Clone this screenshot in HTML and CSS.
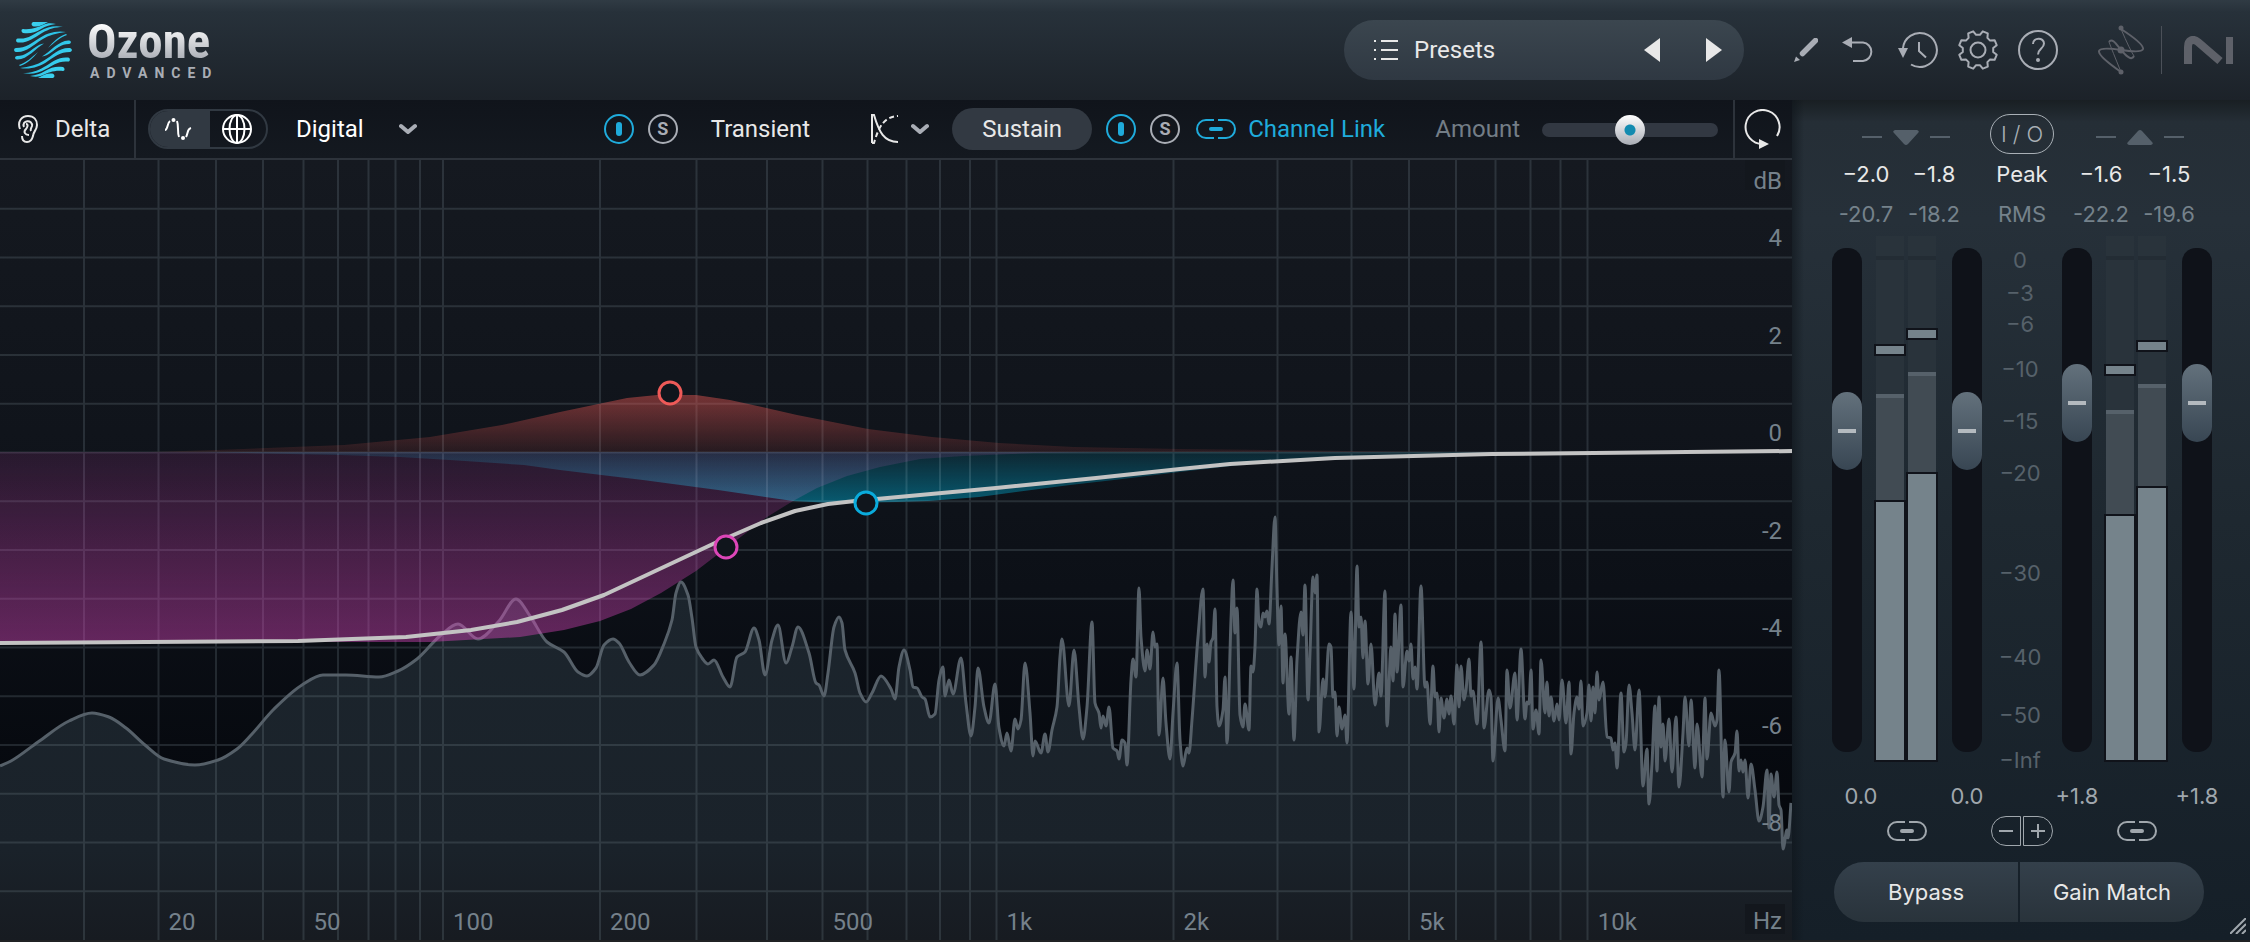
FILE: index.html
```html
<!DOCTYPE html>
<html lang="en">
<head>
<meta charset="utf-8">
<title>Ozone Advanced</title>
<link rel="stylesheet" href="styles.css">
</head>
<body>
<svg class="defs" aria-hidden="true">
  <symbol id="link" viewBox="0 0 40 20">
    <path d="M18 1H10a9 9 0 0 0 0 18H18M22 1H30a9 9 0 0 1 0 18H22" fill="none" stroke="currentColor" stroke-width="2"/>
    <rect x="13" y="8" width="14" height="4" rx="2" fill="currentColor"/>
  </symbol>
  <symbol id="chevron" viewBox="0 0 18 12">
    <path d="M2 3l7 6 7-6" fill="none" stroke="currentColor" stroke-width="4" stroke-linecap="round" stroke-linejoin="round"/>
  </symbol>
</svg>

<div class="app">
  <header class="header">
    <div class="brand">
      <svg class="brand-mark" viewBox="0 0 58 56" aria-hidden="true">
        <defs>
          <linearGradient id="mark" gradientUnits="userSpaceOnUse" x1="0" y1="0" x2="58" y2="56"><stop offset="0" stop-color="#45dcf4"/><stop offset="1" stop-color="#0fa3d6"/></linearGradient>
          <g id="waves">
            <path d="M19 0H34C29 3 25 5 20 4.500C17 4 17 1 19 0Z"/>
            <path d="M9 7C18 8 24 5 29 3C33 1 37 1 42 2C36 3 32 4 27 7C21 11 15 12 9 11C7 10 7 7 9 7Z"/>
            <path d="M4 16.500C14 17.500 20 12 26 9C33 5 41 3 49 5C41 5 35 7 28 11C20 16 13 21.500 4 20.500C1 20 2 16 4 16.500Z"/>
            <path d="M2 26C12 26 18 21 24 17C32 11 43 8 52 10C43 11 35 13 28 17.500C19 23 12 31 2 30C-1 29 0 26 2 26Z"/>
            <path d="M3 34C11 34 16 29 21 25.500C24 23 27 22 30 21.500C22 26 13 38 3 37.500C0 37 1 34 3 34Z"/>
            <path d="M5 43C12 41 18 35 24 30C19 36 13 42 6 44Z"/>
          </g>
        </defs>
        <g fill="url(#mark)"><use href="#waves"/><use href="#waves" transform="rotate(180 29 28)"/></g>
      </svg>
      <div class="brand-text">
        <span class="brand-name">Ozone</span>
        <span class="brand-tier">ADVANCED</span>
      </div>
    </div>

    <div class="presets">
      <button class="presets-open" type="button">
        <svg width="24" height="20" viewBox="0 0 24 20" aria-hidden="true"><path d="M0 1h2M0 10h2M0 19h2M7 1h17M7 10h17M7 19h17" stroke="currentColor" stroke-width="2"/></svg>
        Presets
      </button>
      <button class="step" type="button" aria-label="Previous preset"><svg width="16" height="24" viewBox="0 0 16 24"><path d="M16 0v24L0 12z" fill="currentColor"/></svg></button>
      <button class="step" type="button" aria-label="Next preset"><svg width="16" height="24" viewBox="0 0 16 24"><path d="M0 0v24l16-12z" fill="currentColor"/></svg></button>
    </div>

    <div class="tools">
      <button class="tool" type="button" aria-label="Edit"><svg width="24" height="24" viewBox="0 0 24 24"><path d="M8.500 15.500L21.500 2.500" stroke="currentColor" stroke-width="5.500" stroke-linecap="round"/><path d="M0 24l2-5.500 4 3.500z" fill="currentColor"/></svg></button>
      <button class="tool" type="button" aria-label="Undo"><svg width="40" height="40" viewBox="0 0 40 40"><path d="M14 12.500h11a9.300 9.300 0 0 1 0 18.500H15" fill="none" stroke="currentColor" stroke-width="2"/><path d="M4 12.500L14 7v11z" fill="currentColor"/></svg></button>
      <button class="tool" type="button" aria-label="History"><svg width="40" height="40" viewBox="0 0 40 40"><path d="M5 18A17 17 0 1 1 13 34.500M21 12v9l7 6.500" fill="none" stroke="currentColor" stroke-width="2"/><path d="M0 18h10L5 28z" fill="currentColor"/></svg></button>
      <button class="tool" type="button" aria-label="Settings"><svg width="40" height="40" viewBox="0 0 40 40" fill="none" stroke="currentColor" stroke-width="2" stroke-linejoin="round"><path d="M38.700 24.800L36.600 29.800L32.100 29.400L29.400 32.100L29.800 36.600L24.800 38.700L21.900 35.200H18.100L15.200 38.700L10.200 36.600L10.600 32.100L7.900 29.400L3.400 29.800L1.300 24.800L4.800 21.900V18.100L1.300 15.200L3.400 10.200L7.900 10.600L10.600 7.900L10.200 3.400L15.200 1.300L18.100 4.800H21.900L24.800 1.300L29.800 3.400L29.400 7.900L32.100 10.600L36.600 10.200L38.700 15.200L35.200 18.100V21.900Z"/><circle cx="20" cy="20" r="7.500"/></svg></button>
      <button class="tool" type="button" aria-label="Help"><svg width="40" height="40" viewBox="0 0 40 40"><circle cx="20" cy="20" r="19" fill="none" stroke="currentColor" stroke-width="2"/><path d="M15 14c0-7 11-7 11-.5 0 5-6 5-6 11" fill="none" stroke="currentColor" stroke-width="2"/><circle cx="20" cy="30" r="2" fill="currentColor"/></svg></button>
    </div>

    <div class="makers">
      <svg width="46" height="50" viewBox="0 0 46 50" fill="none" stroke="currentColor" aria-hidden="true">
        <path d="M23 4Q46 19 45 24Q44 28 23 25Q2 22 1 26Q0 31 23 47" stroke-width="2"/>
        <path d="M23 4Q32 25 36 31M11 17Q14 25 23 47" stroke-width="1"/>
        <path d="M36 31C33 37 27 29 23 25C19 20 14 12 11 17" stroke-width="2"/>
        <g fill="currentColor" stroke="none"><circle cx="23" cy="3" r="2.500"/><circle cx="23" cy="47" r="2.500"/><circle cx="23" cy="25" r="3.500"/></g>
      </svg>
      <span class="makers-rule"></span>
      <svg width="50" height="28" viewBox="0 0 50 28" aria-hidden="true">
        <path d="M4 28V11C4 4 9 2 14 6L36 25" fill="none" stroke="currentColor" stroke-width="8"/>
        <rect x="42" y="1" width="7" height="27" fill="currentColor"/>
      </svg>
    </div>
  </header>

  <main class="body">
    <section class="module">
      <div class="toolbar">
        <button class="delta" type="button">
          <svg width="20" height="28" viewBox="0 0 20 28" fill="none" stroke="currentColor" stroke-width="2" aria-hidden="true"><path d="M2 14C-1 6 4 1 10 1C16 1 19 5 19 10C19 15 15 17 15 21C14 25 12 27 9 27C6 27 4 25 4 21"/><path d="M6 12C3 5 15 4 14 11C13 14 12 14 13 16M8 9C11 9 9 13 8 14C5 17 7 20 11 20"/></svg>
          Delta
        </button>
        <div class="mode" role="group" aria-label="Mode">
          <button class="mode-item is-on" type="button" aria-label="Curve"><svg width="28" height="24" viewBox="0 0 28 24" fill="none" stroke="currentColor" stroke-width="2"><path d="M0 13C3 13 2 6 5 4M12 4C14 9 12 15 14 20M21 20C23 17 22 12 26 11"/><g fill="currentColor" stroke="none"><circle cx="8.500" cy="3" r="2"/><circle cx="18" cy="21" r="2"/></g></svg></button>
          <button class="mode-item" type="button" aria-label="Globe"><svg width="30" height="30" viewBox="0 0 30 30" fill="none" stroke="currentColor" stroke-width="2"><circle cx="15" cy="15" r="14"/><ellipse cx="15" cy="15" rx="7.500" ry="14"/><path d="M15 1v28M1 15h28"/></svg></button>
        </div>
        <label class="picker">
          <select class="picker-select" aria-label="Filter type"><option>Digital</option></select>
          <svg class="chevron" width="18" height="12"><use href="#chevron"/></svg>
        </label>

        <div class="channels">
          <button class="power" type="button" aria-label="Enable transient"><span class="power-bar"></span></button>
          <button class="solo" type="button" aria-label="Solo transient">S</button>
          <button class="tab tab-transient" type="button">Transient</button>
          <button class="shape" type="button" aria-label="Transient shape">
            <svg width="29" height="30" viewBox="0 0 29 30" fill="none" stroke="currentColor" stroke-width="2"><path d="M2 29V1H4C9 18 14 28 28 28"/><path d="M2 29H4C9 12 14 3 28 2" stroke-dasharray="5 3"/></svg>
            <svg class="chevron" width="18" height="12"><use href="#chevron"/></svg>
          </button>
          <button class="tab tab-sustain" type="button">Sustain</button>
          <button class="power" type="button" aria-label="Enable sustain"><span class="power-bar"></span></button>
          <button class="solo" type="button" aria-label="Solo sustain">S</button>
          <button class="channel-link" type="button"><svg width="40" height="20"><use href="#link"/></svg>Channel Link</button>
          <label class="amount-label" for="amount">Amount</label>
          <input class="amount" id="amount" type="range" min="0" max="100" value="50">
        </div>
        <button class="loop" type="button" aria-label="Reset"><svg width="38" height="40" viewBox="0 0 38 40"><path d="M34 27A17 17 0 1 0 20 35" fill="none" stroke="currentColor" stroke-width="2"/><path d="M16 30l10 5-10 5z" fill="currentColor"/></svg></button>
      </div>

      <div class="plot">
        <svg class="plot-art" viewBox="0 160 1792 780" preserveAspectRatio="none" aria-label="Equalizer curve">
          <defs>
            <linearGradient id="specFill" gradientUnits="userSpaceOnUse" x1="0" y1="580" x2="0" y2="940"><stop offset="0" stop-color="#1c252d"/><stop offset=".75" stop-color="#1a222a"/><stop offset="1" stop-color="#171b21"/></linearGradient>
            <linearGradient id="redFill" gradientUnits="userSpaceOnUse" x1="0" y1="394" x2="0" y2="452"><stop offset="0" stop-color="#f05a55" stop-opacity=".46"/><stop offset="1" stop-color="#f05a55" stop-opacity=".1"/></linearGradient>
            <linearGradient id="pinkFill" gradientUnits="userSpaceOnUse" x1="0" y1="452" x2="0" y2="642"><stop offset="0" stop-color="#dc46be" stop-opacity=".12"/><stop offset="1" stop-color="#dc46be" stop-opacity=".43"/></linearGradient>
            <linearGradient id="blueFill" gradientUnits="userSpaceOnUse" x1="0" y1="452" x2="0" y2="503"><stop offset="0" stop-color="#00b4dc" stop-opacity=".12"/><stop offset="1" stop-color="#00b4dc" stop-opacity=".45"/></linearGradient>
          </defs>
          <path id="specArea" fill="url(#specFill)"/>
          <path id="grid" class="grid"/>
          <path id="specLine" class="spec-line"/>
          <path id="pinkBand" fill="url(#pinkFill)"/>
          <path id="blueBand" class="blend" fill="url(#blueFill)"/>
          <path id="redBand" fill="url(#redFill)"/>
          <path id="sumLine" class="sum-line"/>
          <g class="nodes">
            <circle cx="670" cy="393" r="11" stroke="#ee5a58"/>
            <circle cx="726" cy="547" r="11" stroke="#dd46b8"/>
            <circle cx="866" cy="503" r="11" stroke="#0aabdc"/>
          </g>
        </svg>
        <span class="unit unit-db">dB</span>
        <span class="db" style="top:10.060%">4</span>
        <span class="db" style="top:22.560%">2</span>
        <span class="db" style="top:35.060%">0</span>
        <span class="db" style="top:47.560%">-2</span>
        <span class="db" style="top:60.060%">-4</span>
        <span class="db" style="top:72.560%">-6</span>
        <span class="db" style="top:85.060%">-8</span>
        <span class="hz" style="left:8.840%">20</span>
        <span class="hz" style="left:16.940%">50</span>
        <span class="hz" style="left:24.720%">100</span>
        <span class="hz" style="left:33.480%">200</span>
        <span class="hz" style="left:45.900%">500</span>
        <span class="hz" style="left:55.610%">1k</span>
        <span class="hz" style="left:65.490%">2k</span>
        <span class="hz" style="left:78.630%">5k</span>
        <span class="hz" style="left:88.600%">10k</span>
        <span class="unit unit-hz">Hz</span>
      </div>
    </section>

    <aside class="io">
      <div class="io-row">
        <div class="arrow"><i class="dash"></i><svg width="26" height="15" viewBox="0 0 26 15"><path d="M2 0H24Q27 1 25 3L15 14Q13 16 11 14L1 3Q-1 1 2 0Z" fill="currentColor"/></svg><i class="dash"></i></div>
        <button class="io-button" type="button"><span>I</span><span>/</span><span>O</span></button>
        <div class="arrow arrow-out"><i class="dash"></i><svg width="26" height="15" viewBox="0 0 26 15"><path d="M2 15H24Q27 14 25 12L15 1Q13-1 11 1L1 12Q-1 14 2 15Z" fill="currentColor"/></svg><i class="dash"></i></div>
      </div>
      <div class="io-row peak"><div class="pair"><span>−2.0</span><span>−1.8</span></div><span class="mid">Peak</span><div class="pair pair-out"><span>−1.6</span><span>−1.5</span></div></div>
      <div class="io-row rms"><div class="pair"><span>-20.7</span><span>-18.2</span></div><span class="mid">RMS</span><div class="pair pair-out"><span>-22.2</span><span>-19.6</span></div></div>

      <div class="io-row meters">
        <div class="strip">
          <input class="fader" type="range" min="0" max="1000" value="662" aria-label="Input left gain">
          <div class="meter"><div class="meter-mid" style="height:69.800%"></div><div class="meter-main" style="height:49.200%"></div><div class="meter-peak" style="bottom:77.500%"></div></div>
          <div class="meter"><div class="meter-mid" style="height:74%"></div><div class="meter-main" style="height:54.600%"></div><div class="meter-peak" style="bottom:80.500%"></div></div>
          <input class="fader" type="range" min="0" max="1000" value="662" aria-label="Input right gain">
        </div>
        <div class="scale">
          <span style="top:4.600%">0</span><span style="top:10.800%">−3</span><span style="top:16.800%">−6</span><span style="top:25.300%">−10</span><span style="top:35.200%">−15</span><span style="top:45%">−20</span><span style="top:64%">−30</span><span style="top:80%">−40</span><span style="top:91%">−50</span><span style="top:99.700%">−Inf</span>
        </div>
        <div class="strip">
          <input class="fader" type="range" min="0" max="1000" value="728" aria-label="Output left gain">
          <div class="meter"><div class="meter-mid" style="height:66.800%"></div><div class="meter-main" style="height:46.600%"></div><div class="meter-peak" style="bottom:73.700%"></div></div>
          <div class="meter"><div class="meter-mid" style="height:71.800%"></div><div class="meter-main" style="height:51.900%"></div><div class="meter-peak" style="bottom:78.200%"></div></div>
          <input class="fader" type="range" min="0" max="1000" value="728" aria-label="Output right gain">
        </div>
      </div>

      <div class="io-row gains"><div class="gain-pair gain-in"><span>0.0</span><span>0.0</span></div><span></span><div class="gain-pair"><span>+1.8</span><span>+1.8</span></div></div>
      <div class="io-row links">
        <button class="link" type="button" aria-label="Link input faders"><svg width="40" height="20"><use href="#link"/></svg></button>
        <div class="nudge">
          <button class="nudge-less" type="button" aria-label="Decrease"><svg width="14" height="14" viewBox="0 0 14 14"><path d="M0 7h14" stroke="currentColor" stroke-width="2"/></svg></button>
          <button class="nudge-more" type="button" aria-label="Increase"><svg width="14" height="14" viewBox="0 0 14 14"><path d="M0 7h14M7 0v14" stroke="currentColor" stroke-width="2"/></svg></button>
        </div>
        <button class="link" type="button" aria-label="Link output faders"><svg width="40" height="20"><use href="#link"/></svg></button>
      </div>
      <div class="actions"><button class="action" type="button">Bypass</button><button class="action" type="button">Gain Match</button></div>
      <svg class="grip" width="16" height="16" viewBox="0 0 16 16" aria-hidden="true"><path d="M0 16L16 0M6 16L16 6M12 16l4-4" stroke="currentColor" stroke-width="2"/></svg>
    </aside>
  </main>
</div>
<script src="plot.js"></script>
</body>
</html>
```

FILE: plot.js
```js
const spectrum = [
  0,766, 11,761, 38,742, 69,721, 92,713, 109,717, 126,728, 145,745, 164,759, 195,765, 218,760, 237,749, 252,734, 274,709,
  302,685, 323,675, 346,675, 379,677, 398,671, 417,659, 440,636, 458,624, 478,639, 499,621, 516,599, 530,616, 547,642,
  564,652, 578,672, 587,676, 596,668, 604,645, 613,639, 619,643, 629,662, 640,675, 654,665, 664,644, 672,620, 676,593,
  681,582, 688,595, 692,618, 696,647, 702,658, 708,664, 714,660, 723,677, 730,687, 737,657, 745,652, 754,628, 759,640,
  765,675, 772,640, 778,625, 786,663, 792,647, 798,627, 809,653, 816,683, 819,685, 824,696, 828,673, 834,627, 839,617,
  842,623, 845,650, 855,673, 860,693, 866,702, 872,693, 881,676, 891,689, 895,699, 899,667, 904,650, 910,670, 913,687,
  917,688, 922,697, 925,699, 930,717, 935,714, 939,680, 943,667, 945,696, 949,680, 953,694, 961,658, 966,703, 971,736,
  975,707, 978,668, 984,707, 989,723, 995,684, 999,728, 1004,746, 1007,733, 1011,751, 1015,719, 1018,729, 1021,720,
  1025,663, 1030,713, 1033,756, 1035,741, 1041,753, 1045,734, 1048,752, 1052,730, 1057,707, 1060,657, 1062,639, 1069,706,
  1074,650, 1079,707, 1083,739, 1087,707, 1092,622, 1095,703, 1099,713, 1101,728, 1103,716, 1106,726, 1109,707, 1113,748,
  1117,751, 1119,759, 1122,740, 1125,743, 1127,765, 1131,680, 1133,659, 1136,677, 1139,588, 1141,637, 1145,671, 1147,650,
  1150,669, 1153,632, 1155,647, 1157,644, 1159,735, 1163,678, 1166,723, 1170,759, 1173,713, 1177,663, 1180,740, 1183,766,
  1187,748, 1189,753, 1192,720, 1198,637, 1203,589, 1205,677, 1207,644, 1209,662, 1211,642, 1213,638, 1215,609, 1217,707,
  1219,726, 1223,710, 1225,677, 1227,743, 1231,620, 1233,580, 1235,633, 1237,608, 1240,715, 1243,727, 1245,704, 1249,730,
  1251,666, 1253,672, 1255,647, 1257,589, 1259,623, 1261,627, 1263,613, 1265,617, 1267,611, 1269,624, 1272,567, 1275,517,
  1277,590, 1279,645, 1281,606, 1283,683, 1285,634, 1289,714, 1291,657, 1294,740, 1297,660, 1301,612, 1303,635, 1305,585,
  1308,700, 1310,653, 1313,577, 1315,593, 1317,575, 1319,732, 1323,679, 1325,697, 1329,644, 1331,647, 1333,697, 1335,692,
  1337,736, 1339,707, 1342,729, 1345,715, 1347,743, 1351,612, 1354,689, 1357,566, 1359,627, 1361,617, 1363,658, 1365,621,
  1368,684, 1371,644, 1375,705, 1379,673, 1381,696, 1385,591, 1387,726, 1391,647, 1393,681, 1395,614, 1397,672, 1401,605,
  1403,687, 1407,651, 1409,661, 1411,644, 1413,679, 1415,667, 1417,689, 1421,586, 1425,687, 1427,682, 1430,724, 1433,666,
  1435,697, 1437,693, 1439,732, 1441,698, 1444,718, 1447,699, 1449,714, 1451,696, 1454,724, 1457,665, 1459,707, 1461,666,
  1464,700, 1466,690, 1469,659, 1471,696, 1473,691, 1477,724, 1481,642, 1484,728, 1489,690, 1491,697, 1493,761, 1498,698,
  1501,720, 1505,751, 1507,670, 1510,708, 1515,673, 1517,720, 1521,649, 1525,719, 1527,702, 1529,704, 1531,670, 1533,729,
  1536,710, 1539,734, 1541,660, 1545,713, 1547,682, 1549,716, 1551,697, 1554,721, 1557,704, 1559,720, 1562,680, 1566,723,
  1569,682, 1571,754, 1574,713, 1577,697, 1579,709, 1581,681, 1583,726, 1587,713, 1589,685, 1591,721, 1593,687, 1595,713,
  1597,672, 1599,700, 1603,682, 1607,737, 1611,738, 1613,750, 1615,743, 1617,768, 1621,693, 1624,752, 1626,743, 1629,685,
  1632,713, 1635,750, 1639,690, 1643,786, 1647,749, 1649,804, 1652,763, 1655,706, 1657,771, 1659,697, 1661,747, 1663,724,
  1665,761, 1669,719, 1672,772, 1676,717, 1679,787, 1683,733, 1685,697, 1689,746, 1691,700, 1695,768, 1697,724, 1702,777,
  1705,698, 1707,759, 1711,713, 1715,726, 1717,720, 1719,670, 1723,797, 1725,740, 1729,792, 1731,762, 1735,753, 1737,731,
  1739,771, 1741,760, 1743,772, 1745,760, 1748,798, 1751,764, 1755,790, 1759,821, 1763,807, 1767,770, 1769,828, 1771,774,
  1774,797, 1777,772, 1779,805, 1781,810, 1783,849, 1787,830, 1788,838, 1791,803
];
const pink = [0,642, 430,642, 520,637, 564,630, 600,621, 631,609, 661,593, 696,571, 713,558, 767,517, 793,501, 817,488, 847,476, 880,467, 920,459, 963,456, 1034,453, 1100,452];
const blue = [200,452, 340,455, 400,457, 450,460, 524,465, 560,470, 643,480, 718,490, 793,501, 833,503, 896,502, 928,501, 979,497, 1070,485, 1114,480, 1180,472, 1250,464, 1350,458, 1450,455, 1600,452];
const red = [150,452, 215,450, 344,445, 430,437, 502,425, 560,412, 627,398, 657,395, 696,395, 730,400, 762,407, 797,415, 868,429, 932,437, 999,443, 1074,447, 1180,449, 1350,451, 1450,452];
const sum = [0,643, 298,641, 406,637, 471,630, 517,622, 562,610, 604,595, 715,543, 761,523, 795,511, 828,504, 855,501, 996,488, 1096,478, 1180,469, 1230,464, 1335,458, 1492,454, 1792,451];
const columns = [84, 158.5, 216, 263, 303.5, 338, 368.5, 395.5, 420, 443, 600, 696.5, 767, 822.5, 867.5, 906.5, 940, 970, 996.5, 1173.5, 1277.5, 1351.5, 1409, 1456, 1495.5, 1530.5, 1560.5, 1587.5];

const pairs = flat => flat.reduce((out, v, i) => (i % 2 ? out[out.length - 1].push(v) : out.push([v]), out), []);
const straight = flat => 'M' + pairs(flat).map(p => p.join(' ')).join('L');

// Monotone cubic interpolation: smooth, with flat tangents at peaks and dips.
function smooth(flat) {
  const p = pairs(flat);
  const slope = i => (p[i + 1][1] - p[i][1]) / (p[i + 1][0] - p[i][0]);
  const tangent = p.map((_, i) => {
    if (i === 0) return slope(0);
    if (i === p.length - 1) return slope(i - 1);
    const a = slope(i - 1), b = slope(i);
    return a * b <= 0 ? 0 : 2 * a * b / (a + b);
  });
  let d = 'M' + p[0].join(' ');
  for (let i = 1; i < p.length; i++) {
    const h = (p[i][0] - p[i - 1][0]) / 3;
    d += `C${p[i - 1][0] + h} ${p[i - 1][1] + h * tangent[i - 1]} ${p[i][0] - h} ${p[i][1] - h * tangent[i]} ${p[i][0]} ${p[i][1]}`;
  }
  return d;
}

const draw = (id, d) => document.getElementById(id).setAttribute('d', d);
const line = smooth(spectrum);
draw('specLine', line);
draw('specArea', line + 'L1792 803V940H0Z');
draw('pinkBand', straight(pink) + 'L0 452Z');
draw('blueBand', straight(blue) + 'Z');
draw('redBand', straight(red) + 'Z');
draw('sumLine', straight(sum));
let grid = columns.map(x => `M${x} 160V940`).join('');
for (let i = 0; i < 15; i++) grid += `M0 ${208.75 + i * 48.75}H1792`;
draw('grid', grid);
```

FILE: styles.css
```css
* { box-sizing: border-box; }
body { margin: 0; background: #14191f; color: #e8e8e8; font: 24px/30px Roboto, "Liberation Sans", sans-serif; }
button, select { margin: 0; padding: 0; border: 0; background: none; color: inherit; font: inherit; }
svg { display: block; flex: none; }
.defs { position: absolute; width: 0; height: 0; }
.app { display: flex; flex-direction: column; min-height: 100vh; border-bottom: 2px solid #202224; }

.header { display: flex; align-items: center; height: 100px; padding: 0 16px 0 14px; background: linear-gradient(#303b44, #27313a 12%, #1c2229); }
.brand { display: flex; align-items: center; gap: 15px; margin-right: auto; }
.brand-mark { width: 58px; height: 56px; }
.brand-text { display: flex; flex-direction: column; }
.brand-name { font: bold 49px/46px "Liberation Sans Narrow", "Roboto Condensed", "Liberation Sans", sans-serif; color: transparent; background: linear-gradient(#ffffff 10%, #a9adb5 90%); background-clip: text; -webkit-background-clip: text; }
.brand-tier { padding-left: 3px; font: bold 14px/16px "Liberation Sans Narrow", Roboto, sans-serif; letter-spacing: 7px; color: #a9adb5; }
.presets { display: flex; align-items: center; width: 400px; height: 60px; padding: 0 22px 0 30px; border-radius: 30px; background: linear-gradient(#3b464f, #2f3842); }
.presets-open { display: flex; align-items: center; gap: 16px; margin-right: auto; }
.step { margin-left: 46px; }
.tools { display: flex; align-items: center; gap: 20px; margin-left: 50px; color: #a9adb5; }
.makers { display: flex; align-items: center; margin-left: 40px; color: #5e6169; }
.makers-rule { width: 1px; height: 48px; margin: 0 22px 0 17px; background: #4b5058; }

.body { display: flex; flex: 1; }
.module { display: flex; flex: 1; flex-direction: column; min-width: 0; }
.toolbar { display: flex; align-items: center; height: 60px; border-bottom: 2px solid #2d333b; background: linear-gradient(#10141b, #141920); white-space: nowrap; }
.delta { display: flex; align-items: center; align-self: stretch; gap: 17px; width: 136px; padding-left: 18px; border-right: 2px solid #2d333b; }
.mode { display: flex; width: 120px; height: 40px; margin-left: 12px; border: 2px solid #313942; border-radius: 20px; overflow: hidden; color: #fff; }
.mode-item { display: flex; flex: 1; align-items: center; justify-content: center; padding-right: 2px; }
.mode-item.is-on { flex: 0 0 60px; background: #313942; }
.picker { position: relative; display: flex; align-items: center; margin-left: 28px; }
.picker-select { width: 121px; appearance: none; color: #fff; }
.chevron { color: #a9adb5; }
.picker .chevron { position: absolute; right: 0; pointer-events: none; }
.channels { display: flex; align-items: center; margin-left: auto; }
.power, .solo { display: flex; align-items: center; justify-content: center; width: 30px; height: 30px; margin-right: 14px; border: 2px solid #1fabdb; border-radius: 50%; }
.power-bar { width: 6px; height: 14px; border-radius: 3px; background: #1fabdb; }
.solo { margin-right: 0; border-color: #a9adb5; color: #a9adb5; font: bold 18px/18px Roboto, sans-serif; }
.tab-transient { margin: 0 60px 0 33px; }
.shape { display: flex; align-items: center; gap: 12px; }
.tab-sustain { width: 140px; height: 42px; margin: 0 14px 0 23px; border-radius: 21px; background: #323942; }
.channel-link { display: flex; align-items: center; gap: 12px; margin-left: 16px; color: #1fabdb; }
.amount-label { margin: 0 22px 0 50px; color: #737d86; }
.amount { width: 176px; height: 30px; margin: 2px 0 0; appearance: none; background: none; }
.amount::-webkit-slider-runnable-track { height: 14px; border-radius: 7px; background: #323842; }
.amount::-webkit-slider-thumb { appearance: none; width: 30px; height: 30px; margin-top: -8px; border-radius: 50%; background: radial-gradient(circle, #138bb0 5px, transparent 6px), linear-gradient(#ffffff, #a9adb5); }
.loop { display: flex; align-items: center; justify-content: center; align-self: stretch; width: 59px; margin-left: 15px; padding-right: 4px; border-left: 2px solid #2d333b; }

.plot { position: relative; flex: 1; min-height: 400px; overflow: hidden; background: linear-gradient(#151920, #10141b 35%, #0c1017 55%, #070a10 75%, #030508); color: #75818b; }
.plot-art { position: absolute; width: 100%; height: 100%; isolation: isolate; }
.grid { fill: none; stroke: #7f919b; stroke-opacity: .22; stroke-width: 2; }
.spec-line { fill: none; stroke: #566069; stroke-width: 3; stroke-linejoin: round; }
.sum-line { fill: none; stroke: #c3c3c3; stroke-width: 4; stroke-linejoin: round; }
.blend { mix-blend-mode: screen; }
.nodes circle { fill: #10151c; stroke-width: 3; }
.db, .hz, .unit { position: absolute; line-height: 30px; }
.db { right: 10px; margin-top: -15px; }
.hz { bottom: 3px; padding-left: 10px; }
.unit { right: 7px; width: 40px; height: 30px; padding-right: 3px; background: #13171d; text-align: right; }
.unit-db { top: 0; line-height: 42px; }
.unit-hz { bottom: 6px; line-height: 34px; }

.io { position: relative; display: flex; flex-direction: column; width: 458px; padding: 14px 38px 18px 40px; background: linear-gradient(90deg, rgba(14, 20, 26, .6), transparent 12px), linear-gradient(#191f23, #252e36 22px, #263039 120px, #1e2830 50%, #151f28); font: 22px/30px Inter, "Liberation Sans", sans-serif; white-space: nowrap; }
.io-row { display: grid; grid-template-columns: 150px 80px 150px; align-items: center; min-height: 40px; }
.arrow { display: flex; align-items: center; justify-content: center; gap: 11px; margin-top: 6px; padding-right: 2px; color: #55606a; }
.arrow-out { padding: 0 0 0 6px; }
.dash { width: 20px; height: 2px; background: currentColor; }
.io-button { display: flex; align-items: center; justify-content: center; gap: 6px; width: 64px; height: 40px; justify-self: center; border: 1px solid #a9b0b6; border-radius: 20px; color: #a9b0b6; font-weight: 300; }
.pair { display: grid; grid-template-columns: 68px 68px; text-align: center; }
.pair-out { padding-left: 5px; }
.mid { text-align: center; }
.rms { color: #75828b; }
.meters { flex: 1; align-items: stretch; margin: 2px 0 14px; }
.strip { display: grid; grid-template-columns: 44px 32px 44px 30px; }
.fader { appearance: none; writing-mode: vertical-lr; direction: rtl; width: 30px; height: auto; min-height: 0; margin: 12px 0 10px; border-radius: 14px; background: #0f1219; }
.fader::-webkit-slider-thumb { appearance: none; width: 30px; height: 78px; border-radius: 15px; background: linear-gradient(#b4babf, #b4babf) center / 18px 4px no-repeat, linear-gradient(#63717c, #384653); }
.meter { position: relative; width: 28px; margin-bottom: 2px; background: linear-gradient(transparent 20px, #232c34 20px, #232c34 24px, transparent 24px), #29333b; }
.meter-mid, .meter-main, .meter-peak { position: absolute; right: 0; bottom: 0; left: 0; }
.meter-mid { border-top: 4px solid #56616a; background: #414b53; }
.meter-main { background: #75838b; outline: 2px solid #10131a; }
.meter-peak { height: 8px; background: #75838b; outline: 2px solid #10131a; }
.scale { position: relative; color: #56616a; text-align: center; }
.scale span { position: absolute; right: 4px; left: 0; margin-top: -15px; }
.gains { color: #a0a7ad; }
.gain-pair { display: flex; justify-content: space-between; }
.gain-pair span { display: flex; justify-content: center; width: 30px; }
.gain-in { padding-left: 14px; }
.links { min-height: 30px; color: #a0a7ad; }
.link { justify-self: center; }
.nudge { display: flex; justify-content: center; gap: 2px; }
.nudge button { display: flex; align-items: center; justify-content: center; width: 30px; height: 30px; border: 1px solid #a0a7ad; }
.nudge .nudge-less { border-radius: 15px 0 0 15px; }
.nudge .nudge-more { border-radius: 0 15px 15px 0; }
.actions { display: flex; gap: 2px; margin: 16px 8px 0 2px; }
.action { flex: 1; height: 60px; background: linear-gradient(#34404b, #29333b); }
.action:first-child { border-radius: 30px 0 0 30px; }
.action:last-child { border-radius: 0 30px 30px 0; }
.grip { position: absolute; right: 4px; bottom: 6px; color: #a0a7ad; }
```
